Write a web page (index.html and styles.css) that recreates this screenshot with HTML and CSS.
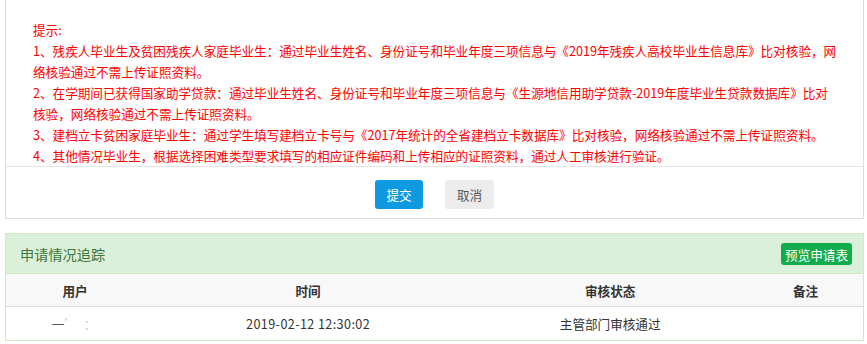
FILE: index.html
```html
<!DOCTYPE html>
<html lang="zh-CN">
<head>
    <meta charset="UTF-8">
    <title>申请</title>
    <link rel="stylesheet" href="styles.css">
</head>
<body>
    <div class="panel">
        <div class="tips">
            <p>提示:</p>
            <p>1、残疾人毕业生及贫困残疾人家庭毕业生：通过毕业生姓名、身份证号和毕业年度三项信息与《2019年残疾人高校毕业生信息库》比对核验，网络核验通过不需上传证照资料。</p>
            <p>2、在学期间已获得国家助学贷款：通过毕业生姓名、身份证号和毕业年度三项信息与《生源地信用助学贷款-2019年度毕业生贷款数据库》比对核验，网络核验通过不需上传证照资料。</p>
            <p>3、建档立卡贫困家庭毕业生：通过学生填写建档立卡号与《2017年统计的全省建档立卡数据库》比对核验，网络核验通过不需上传证照资料。</p>
            <p>4、其他情况毕业生，根据选择困难类型要求填写的相应证件编码和上传相应的证照资料，通过人工审核进行验证。</p>
        </div>
        <div class="panel-footer">
            <button type="button" class="btn btn-primary">提交</button>
            <button type="button" class="btn btn-default">取消</button>
        </div>
    </div>

    <div class="panel panel-success">
        <div class="panel-heading">
            <span class="panel-title">申请情况追踪</span>
            <button type="button" class="btn-preview">预览申请表</button>
        </div>
        <table class="track">
            <thead>
                <tr>
                    <th class="col-user">用户</th>
                    <th class="col-time">时间</th>
                    <th class="col-state">审核状态</th>
                    <th class="col-note">备注</th>
                </tr>
            </thead>
            <tbody>
                <tr>
                    <td><span class="masked">一<span class="blur">’ ：</span></span></td>
                    <td class="time">2019-02-12 12:30:02</td>
                    <td>主管部门审核通过</td>
                    <td></td>
                </tr>
            </tbody>
        </table>
    </div>
</body>
</html>
```

FILE: styles.css
```css
body {
    margin: 0 3px 0 5px;
    background: #fff;
    font-family: "Noto Sans CJK SC", "Microsoft YaHei", sans-serif;
    font-size: 12.6px;
    color: #333;
}

.panel {
    border: 1px solid #ddd;
    border-top: none;
    background: #fff;
}

.tips {
    padding: 19px 24px 0 27px;
    color: #f00;
    line-height: 21px;
}
.tips p {
    margin: 0;
}

.panel-footer {
    border-top: 1px solid #e5e5e5;
    padding: 13px 0 9px;
    display: flex;
    justify-content: center;
    gap: 22px;
}

.btn {
    width: 48px;
    height: 29px;
    border: none;
    border-radius: 3px;
    font-family: inherit;
    font-size: 12.6px;
    padding: 0;
}
.btn-primary {
    background: #0e9ae0;
    color: #fff;
}
.btn-default {
    width: 49px;
    background: #ececec;
    color: #555;
}

.panel-success {
    margin-top: 14px;
    border: 1px solid #d2e9c8;
}

.panel-heading {
    background: #dbf0d9;
    height: 39px;
    padding: 0 11px 0 14px;
    display: flex;
    align-items: center;
    justify-content: space-between;
    border-bottom: 1px solid #d2e9c8;
}
.panel-title {
    color: #3c763d;
    font-size: 14.2px;
}
.btn-preview {
    background: #13ac4a;
    color: #fff;
    border: none;
    border-radius: 3px;
    height: 22px;
    padding: 0 4px;
    font-family: inherit;
    font-size: 12.6px;
    margin-top: 1px;
}

table.track {
    width: 100%;
    border-collapse: collapse;
    table-layout: fixed;
}
.track th {
    background: #f8f8f8;
    font-weight: bold;
    height: 32px;
    padding: 0;
    border-bottom: 1px solid #ddd;
    color: #333;
}
.track td {
    height: 33px;
    padding: 0;
    text-align: center;
    color: #333;
}
.track td.time {
    letter-spacing: 0.4px;
}
.col-user { width: 16.1%; }
.col-time { width: 38.3%; }
.col-state { width: 32.2%; }
.col-note { width: 13.4%; }

.masked {
    color: #555;
}
.blur {
    color: #ccc;
    letter-spacing: 2px;
}
```
